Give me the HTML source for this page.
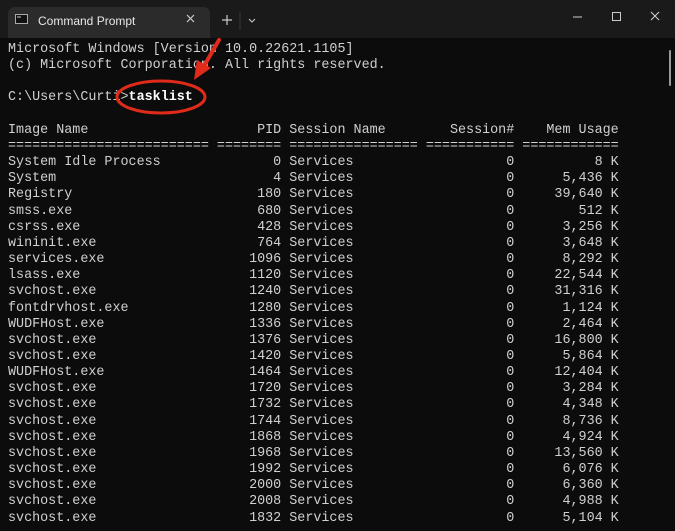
<!DOCTYPE html>
<html><head><meta charset="utf-8"><style>
html,body{margin:0;padding:0;width:675px;height:531px;overflow:hidden;background:#0c0c0c;}
.tb{position:absolute;left:0;top:0;width:675px;height:38px;background:#1a1a1a;}
.tab{position:absolute;left:8px;top:7px;width:202px;height:31px;background:#2b2b2b;border-radius:7px 7px 0 0;}
.t{position:absolute;font-family:"Liberation Sans",sans-serif;font-size:12px;color:#e8e8e8;}
pre{position:absolute;left:8px;top:42px;margin:0;font-family:"Liberation Mono",monospace;font-size:13.4px;line-height:16.15px;color:#d0d0d0;}
.sb{position:absolute;left:669px;top:50px;width:2px;height:36px;background:#9a9a9a;border-radius:1px;}
b{color:#fff;}
</style></head><body>
<div class="tb"></div>
<div class="tab"></div>
<svg style="position:absolute;left:0;top:0" width="675" height="40">
<rect x="15.5" y="14.5" width="12" height="9" fill="#111" stroke="#aaa"/>
<line x1="17" y1="17" x2="21" y2="17" stroke="#ccc"/>
<path d="M187 15l7 7M194 15l-7 7" stroke="#ccc" stroke-width="1.2"/>
<path d="M222 20h10M227 15v10" stroke="#ccc" stroke-width="1.2"/>
<path d="M249 19l3 3 3-3" stroke="#ccc" fill="none"/>
<line x1="240" y1="12" x2="240" y2="30" stroke="#3a3a3a"/>
<path d="M573 17h9" stroke="#ccc"/>
<rect x="612.5" y="12.5" width="8" height="8" fill="none" stroke="#ccc"/>
<path d="M651 12l8 8M659 12l-8 8" stroke="#ccc" stroke-width="1.1"/>
</svg>
<div class="t" style="left:38px;top:14px">Command Prompt</div>
<div class="sb"></div>
<pre>Microsoft Windows [Version 10.0.22621.1105]
(c) Microsoft Corporation. All rights reserved.

C:\Users\Curti&gt;<b>tasklist</b>

Image Name                     PID Session Name        Session#    Mem Usage
========================= ======== ================ =========== ============
System Idle Process              0 Services                   0          8 K
System                           4 Services                   0      5,436 K
Registry                       180 Services                   0     39,640 K
smss.exe                       680 Services                   0        512 K
csrss.exe                      428 Services                   0      3,256 K
wininit.exe                    764 Services                   0      3,648 K
services.exe                  1096 Services                   0      8,292 K
lsass.exe                     1120 Services                   0     22,544 K
svchost.exe                   1240 Services                   0     31,316 K
fontdrvhost.exe               1280 Services                   0      1,124 K
WUDFHost.exe                  1336 Services                   0      2,464 K
svchost.exe                   1376 Services                   0     16,800 K
svchost.exe                   1420 Services                   0      5,864 K
WUDFHost.exe                  1464 Services                   0     12,404 K
svchost.exe                   1720 Services                   0      3,284 K
svchost.exe                   1732 Services                   0      4,348 K
svchost.exe                   1744 Services                   0      8,736 K
svchost.exe                   1868 Services                   0      4,924 K
svchost.exe                   1968 Services                   0     13,560 K
svchost.exe                   1992 Services                   0      6,076 K
svchost.exe                   2000 Services                   0      6,360 K
svchost.exe                   2008 Services                   0      4,988 K
svchost.exe                   1832 Services                   0      5,104 K</pre>
<svg style="position:absolute;left:0;top:0" width="675" height="531">
<ellipse cx="161" cy="97" rx="44" ry="16" fill="none" stroke="#e02a1a" stroke-width="3"/>
<line x1="219" y1="40" x2="204" y2="66" stroke="#e02a1a" stroke-width="4" stroke-linecap="round"/>
<path d="M194 80l3-20 14 8z" fill="#e02a1a"/>
</svg>
</body></html>
